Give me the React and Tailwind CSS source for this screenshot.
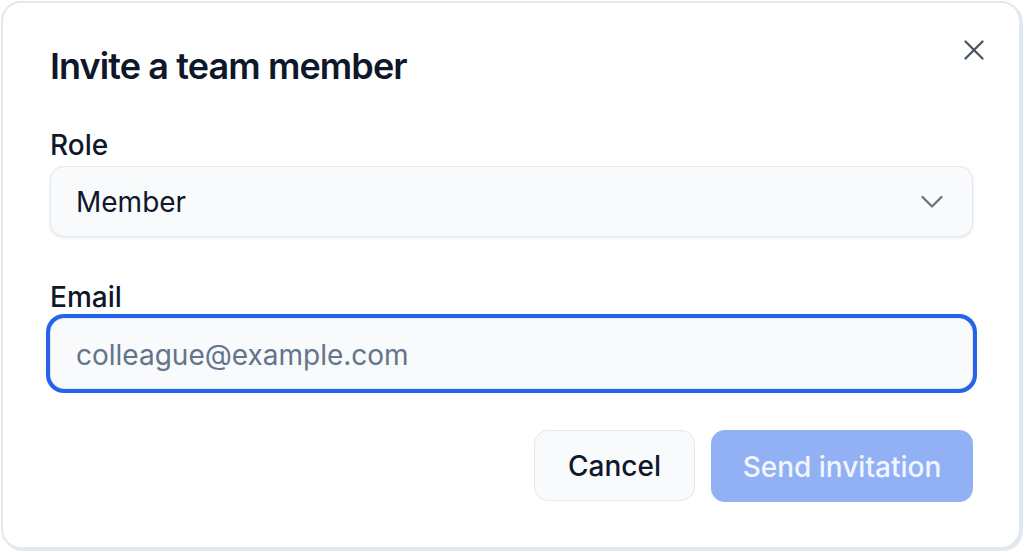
import React from "react";

export default function App() {
  return (
    <div className="w-[1024px] h-[552px] bg-white overflow-hidden" style={{ fontFamily: "Inter, 'Noto Sans', sans-serif" }}>
      <div className="relative ml-[1px] mt-[1px] w-[1020px] h-[548px] rounded-[20px] border-2 border-[#e2e8f0] bg-white shadow-[2px_2px_0_0_#e2e8f0] pl-[47px] pr-[46px] pt-[43px] flex flex-col">
        <button className="absolute top-[35px] right-[33px] w-[24px] h-[24px] flex items-center justify-center text-[#4b5563]">
          <svg width="20" height="20" viewBox="0 0 20 20" fill="none" stroke="currentColor" strokeWidth="2.3" strokeLinecap="round">
            <line x1="1.5" y1="1.5" x2="18.5" y2="18.5" />
            <line x1="18.5" y1="1.5" x2="1.5" y2="18.5" />
          </svg>
        </button>
        <h2 className="text-[36px] leading-[40px] font-semibold text-[#0f172a] tracking-[-0.9px]">Invite a team member</h2>

        <label className="mt-[43px] text-[28px] leading-[32px] font-medium text-[#0f172a]">Role</label>
        <div className="mt-[5px] h-[71px] w-full rounded-[14px] border-[1.5px] border-[#e2e8f0] bg-[#f8fafc] shadow-[0_1px_3px_rgba(15,23,42,0.1)] flex items-center justify-between pl-[25px] pr-[29px]">
          <span className="text-[28px] text-[#0f172a] pt-[1px]">Member</span>
          <svg width="22" height="14" viewBox="0 0 22 14" fill="none" stroke="#6b7280" strokeWidth="2.3" strokeLinecap="round" strokeLinejoin="round">
            <polyline points="1.5,2 11,11.5 20.5,2" />
          </svg>
        </div>

        <label className="mt-[44px] text-[28px] leading-[32px] font-medium text-[#0f172a]">Email</label>
        <div className="mt-[5px] h-[71px] w-full rounded-[14px] border-[1.5px] border-[#e2e8f0] bg-[#f8fafc] ring-4 ring-[#2563eb] flex items-center pl-[25px]">
          <span className="text-[28px] text-[#64748b] pt-[3px]">colleague@example.com</span>
        </div>

        <div className="mt-[41px] flex justify-end gap-[16px]">
          <button className="w-[161px] h-[71px] rounded-[14px] border-[1.5px] border-[#e2e8f0] bg-[#f8fafc] text-[28px] font-medium text-[#0f172a] pt-[1px]">Cancel</button>
          <button className="w-[262px] h-[72px] rounded-[14px] bg-[#92b1f5] text-[28px] font-medium text-[#f1f5ff] pt-[1px]">Send invitation</button>
        </div>
      </div>
    </div>
  );
}
